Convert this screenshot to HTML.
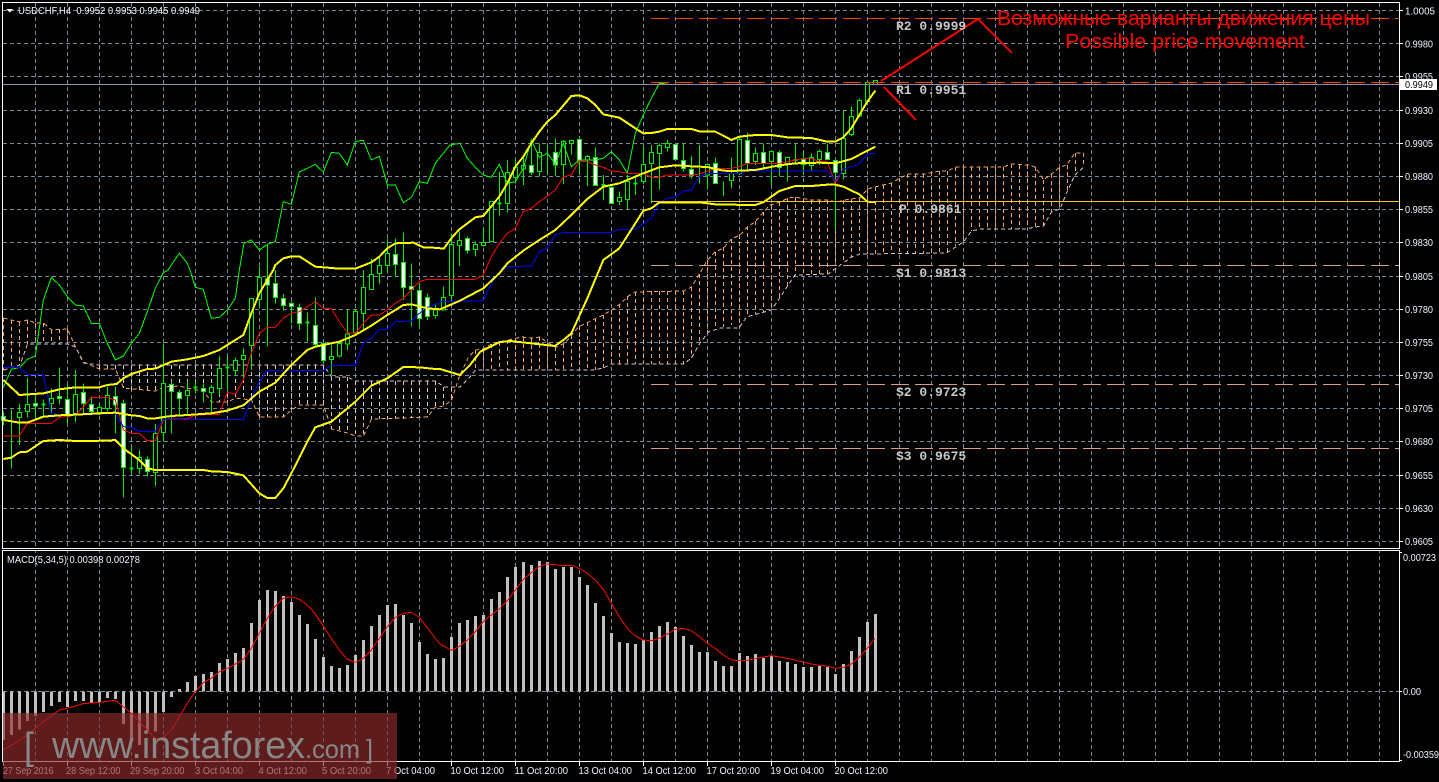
<!DOCTYPE html>
<html lang="en"><head><meta charset="utf-8"><title>USDCHF,H4</title>
<style>html,body{margin:0;padding:0;background:#000;width:1439px;height:782px;overflow:hidden}svg{display:block}
text{font-family:"Liberation Sans","DejaVu Sans",sans-serif}
.a text{font-size:10px;fill:#eef4ff}
.l text{font-family:"Liberation Mono",monospace;font-size:13px;font-weight:bold;fill:#c9c9c9}
</style></head><body>
<svg width="1439" height="782" viewBox="0 0 1439 782" xmlns="http://www.w3.org/2000/svg">
<defs><pattern id="g1" patternUnits="userSpaceOnUse" x="35" y="3" width="32" height="7"><rect width="1" height="4" fill="#778899"/></pattern></defs>
<rect width="1439" height="782" fill="#000"/>
<g shape-rendering="crispEdges">
<!-- grid -->
<rect x="35" y="3" width="1345" height="545" fill="url(#g1)"/>
<rect x="35" y="551" width="1345" height="210" fill="url(#g1)"/>
<path fill="none" stroke="#778899" stroke-dasharray="4 3" d="M3 10.5H1399M3 43.5H1399M3 76.5H1399M3 110.5H1399M3 143.5H1399M3 176.5H1399M3 209.5H1399M3 242.5H1399M3 276.5H1399M3 309.5H1399M3 342.5H1399M3 375.5H1399M3 408.5H1399M3 441.5H1399M3 475.5H1399M3 508.5H1399M3 541.5H1399M3 691.5H1399"/>

<!-- ichimoku cloud hatch -->
<path fill="none" stroke="#f4a460" stroke-dasharray="4 3" d="M3.5 318V370M11.5 320V367M19.5 322V365M27.5 320V344M35.5 323V344M43.5 323V344M51.5 330V344M59.5 329V344M67.5 329V344
M475.5 350V370M483.5 349V370M491.5 344V370M499.5 342V370M507.5 340V370M515.5 338V370M523.5 337V370M531.5 338V370M539.5 337V370M547.5 343V370M555.5 347V370M563.5 344V370M571.5 335V370M579.5 326V370M587.5 322V370M595.5 318V370M603.5 315V368M611.5 310V364M619.5 304V364M627.5 296V364M635.5 292V364M643.5 291V364M651.5 291V364M659.5 291V364M667.5 291V364M675.5 291V364M683.5 291V364M691.5 287V358M699.5 274V344M707.5 260V332M715.5 252V329M723.5 247V327M731.5 239V325M739.5 235V328M747.5 226V317M755.5 221V314M763.5 212V312M771.5 205V310M779.5 202V298M787.5 198V287M795.5 197V275M803.5 199V275M811.5 200V275M819.5 200V275M827.5 200V274M835.5 202V265M843.5 200V260M851.5 199V257M859.5 198V254M867.5 189V254M875.5 187V254M883.5 185V254M891.5 183V254M899.5 178V254M907.5 174V254M915.5 174V254M923.5 174V254M931.5 172V254M939.5 171V254M947.5 171V253M955.5 167V246M963.5 167V241M971.5 167V231M979.5 167V229M987.5 167V229M995.5 167V229M1003.5 167V229M1011.5 164V229M1019.5 165V229M1027.5 165V229M1035.5 167V227M1043.5 180V226M1051.5 174V212M1059.5 167V209M1067.5 165V193M1075.5 153V175M1083.5 153V167"/>
<path fill="none" stroke="#e4c6c6" stroke-dasharray="4 3" d="M99.5 365V369M107.5 365V369M115.5 365V369M123.5 365V388M131.5 365V390M139.5 365V390M147.5 365V390M155.5 365V391M163.5 365V387M171.5 365V386M179.5 365V386M187.5 365V388M195.5 365V390M203.5 365V391M211.5 365V402M219.5 365V402M227.5 365V402M235.5 365V398M243.5 365V399M251.5 365V400M259.5 365V417M267.5 365V417M275.5 365V417M283.5 365V417M291.5 365V410M299.5 365V405M307.5 365V405M315.5 365V405M323.5 365V405M331.5 377V429M339.5 377V431M347.5 377V433M355.5 381V436M363.5 381V436M371.5 381V419M379.5 381V419M387.5 381V419M395.5 381V419M403.5 381V419M411.5 381V418M419.5 381V418M427.5 381V417M435.5 381V407M443.5 387V406M451.5 387V400"/>
<!-- cloud edges -->
<polyline fill="none" stroke="#f4a460" stroke-dasharray="4 3" points="3.5,318 19.5,322 27.5,320 35.5,323 43.5,323 51.5,330 67.5,329 75.5,347 83.5,362 99.5,369 115.5,369 123.5,388 155.5,391 163.5,387 179.5,386 195.5,390 203.5,391 211.5,402 227.5,402 235.5,398 251.5,400 259.5,417 283.5,417 291.5,410 299.5,405 323.5,405 331.5,429 347.5,433 355.5,436 363.5,436 371.5,419 427.5,417 435.5,407 444,406 451.5,400 460,375 468.5,357 475.5,350 483.5,349 491.5,344 500,342 521.5,337 531.5,338 540,337 548,343 556.5,347 565,343 571.5,335 578.5,327 596.5,318 603.5,315 611.5,310 620,304 628.5,296 635,292 683.5,291 691.5,287 700,273 707.5,260 715,252 723.5,248 731.5,239 740,235 748.5,226 755,222 763.5,212 770,205 780,202 788.5,198 795,197 811.5,200 826.5,200 836.5,202 850,199 860,198 867.5,189 875,187 891.5,183 900,178 908.5,174 923.5,174 940,171 947,171 956.5,167 1003.5,167 1011.5,164 1028.5,165 1035,167 1040,174 1043.5,180 1051.5,174 1060,167 1066.5,165 1075,153 1083.5,153 1083.5,167"/>
<polyline fill="none" stroke="#d8bfd8" stroke-dasharray="4 3" points="3.5,370 20,365 27.5,344 67.5,344 75.5,347 83.5,363 99.5,365 323.5,365 331.5,377 347.5,377 355.5,381 436,381 444,387 460,387 470,377 475.5,370 593.5,370 603.5,368 611.5,364 683.5,364 691.5,358 700,343 708.5,332 720,328 739,328 746.5,317 771.5,310 795,275 828,274 851.5,257 860,254 946.5,253 963.5,242 971.5,231 980,229 1026.5,229 1035,227 1043.5,226 1051.5,212 1060,209 1066.5,193 1075,175 1083.5,167"/>

<!-- candles k0-54 -->
<g transform="translate(0,270) scale(.33333)" stroke="#00f000" stroke-width="3">
<path fill="none" d="M10.5 425V465M34.5 418V596M58.5 402V525M82.5 324V443M106.5 372V450M130.5 388V436M154.5 355V430M178.5 292V403M202.5 345V460M226.5 300V456M250.5 340V430M274.5 380V430M298.5 400V435M322.5 350V425M346.5 350V490M370.5 388V682M394.5 530V610M418.5 540V612M442.5 560V620M466.5 462V648M490.5 220V515M514.5 335V490M538.5 360V433M562.5 335V435M586.5 335V370M610.5 340V397M634.5 345V430M658.5 260V375M682.5 260V360M706.5 262V318M730.5 235V330M754.5 85V300M778.5 -10V115M802.5 -75V230M826.5 0V100M850.5 72V122M874.5 95V160M898.5 100V180M922.5 128V215M946.5 82V228M970.5 215V280M994.5 225V315M1018.5 215V262M1042.5 118V240M1066.5 118V195M1090.5 0V180M1114.5 -35V60M1138.5 -40V40M1162.5 -95V10M1186.5 -95V20M1210.5 -113V90M1234.5 -20V170M1258.5 40V170M1282.5 70V150M1306.5 100V145"/>
<path fill="#000" d="M52.5 428h12V442h-12zM76.5 403h12V424h-12zM148.5 385h12V400h-12zM220.5 373h12V430h-12zM292.5 413h12V428h-12zM316.5 376h12V415h-12zM412.5 562h12V595h-12zM460.5 490h12V607h-12zM484.5 340h12V487h-12zM556.5 361h12V376h-12zM628.5 352h12V367h-12zM652.5 295h12V355h-12zM700.5 271h12V301h-12zM724.5 256h12V268h-12zM748.5 85h12V226h-12zM772.5 22h12V88h-12zM988.5 260h12V268h-12zM1012.5 220h12V258h-12zM1036.5 192h12V222h-12zM1060.5 124h12V188h-12zM1084.5 52h12V130h-12zM1108.5 13h12V58h-12zM1132.5 -13h12V10h-12zM1156.5 -50h12V-13h-12zM1300.5 120h12V137h-12z"/>
<path fill="#fff" d="M4.5 440h12V452h-12zM100.5 401h12V408h-12zM172.5 379h12V385h-12zM196.5 388h12V440h-12zM244.5 367h12V400h-12zM268.5 403h12V424h-12zM340.5 379h12V405h-12zM364.5 400h12V592h-12zM436.5 568h12V604h-12zM508.5 344h12V364h-12zM532.5 367h12V385h-12zM604.5 355h12V364h-12zM796.5 25h12V45h-12zM820.5 40h12V82h-12zM844.5 85h12V107h-12zM868.5 100h12V109h-12zM892.5 112h12V160h-12zM940.5 166h12V224h-12zM964.5 220h12V271h-12zM1180.5 -47h12V-17h-12zM1204.5 -23h12V52h-12zM1228.5 50h12V58h-12zM1252.5 62h12V145h-12zM1276.5 83h12V140h-12z"/>
<path fill="none" stroke-width="6" d="M124.5 403h12M388.5 596h12M580.5 353h12M676.5 293h12M916.5 158h12"/>
</g>
<!-- candles k55-109 -->
<g transform="translate(440,60) scale(.33333)" stroke="#00f000" stroke-width="3">
<path fill="none" d="M10.5 680V752M34.5 520V720M58.5 515V618M82.5 530V580M106.5 545V590M130.5 507V560M154.5 424V548M178.5 336V466M202.5 300V458M226.5 300V370M250.5 290V375M274.5 240V345M298.5 250V350M322.5 255V345M346.5 235V348M370.5 240V372M394.5 238V283M418.5 235V345M442.5 285V378M466.5 262V378M490.5 345V420M514.5 375V432M538.5 395V435M562.5 345V448M586.5 345V405M610.5 258V372M634.5 255V430M658.5 250V388M682.5 240V275M706.5 250V300M730.5 250V335M754.5 290V355M778.5 255V370M802.5 310V388M826.5 292V372M850.5 365V408M874.5 292V385M898.5 232V345M922.5 217V330M946.5 262V315M970.5 250V330M994.5 272V375M1018.5 272V350M1042.5 290V365M1066.5 250V310M1090.5 272V345M1114.5 280V335M1138.5 268V315M1162.5 250V300M1186.5 298V505M1210.5 150V358M1234.5 140V228M1258.5 115V172M1282.5 67V127M1306.5 60V75"/>
<path fill="#000" d="M4.5 712h12V750h-12zM28.5 553h12V707h-12zM52.5 541h12V556h-12zM100.5 553h12V568h-12zM124.5 547h12V556h-12zM148.5 424h12V545h-12zM196.5 337h12V430h-12zM220.5 322h12V352h-12zM244.5 316h12V327h-12zM292.5 277h12V334h-12zM364.5 244h12V313h-12zM388.5 241h12V250h-12zM436.5 290h12V300h-12zM532.5 413h12V425h-12zM556.5 365h12V418h-12zM604.5 313h12V365h-12zM628.5 277h12V311h-12zM652.5 256h12V280h-12zM676.5 250h12V262h-12zM796.5 313h12V345h-12zM868.5 340h12V361h-12zM892.5 238h12V340h-12zM940.5 280h12V305h-12zM988.5 274h12V305h-12zM1036.5 292h12V310h-12zM1108.5 292h12V316h-12zM1132.5 274h12V298h-12zM1204.5 235h12V340h-12zM1228.5 169h12V224h-12zM1252.5 121h12V168h-12zM1276.5 67h12V124h-12zM1300.5 62h12V73h-12z"/>
<path fill="#fff" d="M76.5 535h12V571h-12zM268.5 316h12V337h-12zM340.5 278h12V315h-12zM412.5 239h12V300h-12zM460.5 293h12V376h-12zM508.5 382h12V430h-12zM700.5 253h12V298h-12zM724.5 302h12V325h-12zM748.5 329h12V346h-12zM820.5 310h12V370h-12zM916.5 241h12V310h-12zM964.5 277h12V310h-12zM1012.5 277h12V322h-12zM1084.5 298h12V313h-12zM1156.5 277h12V299h-12zM1180.5 301h12V337h-12z"/>
<path fill="none" stroke-width="6" d="M172.5 430h12M484.5 375h12M580.5 370h12M1060.5 300h12"/>
</g>

<!-- indicator lines left (zoom2 coords) -->
<g transform="translate(0,270) scale(.33333)" fill="none" stroke-width="3">
<polyline stroke="#00ff00" points="10,352 34,298 60,292 82,268 106,258 130,90 154,22 178,45 202,80 226,105 250,108 274,160 298,160 322,220 346,270 370,258 394,220 418,190 442,125 466,55 490,8 504,0 538,-50 562,-20 570,0 586,52 610,58 634,145 658,142 682,120 706,85 718,0 732,-80 754,-90 778,-60 802,-77 826,-85 850,-205 874,-197 898,-294 922,-305 946,-317 970,-294 994,-353 1018,-350 1042,-315 1066,-386 1090,-389 1114,-330 1138,-341 1162,-255 1186,-255 1210,-202 1234,-218 1258,-265 1282,-260 1306,-320 1320,-338"/>
<polyline stroke="#ff0000" points="10,498 58,498 82,460 154,460 178,442 226,436 250,412 274,382 322,382 346,390 370,480 394,490 418,490 442,512 466,512 490,450 514,447 562,447 586,435 658,433 682,367 706,373 730,330 754,250 778,190 802,172 826,172 850,145 874,130 898,125 946,95 970,115 994,115 1018,155 1042,188 1066,190 1090,160 1114,135 1138,135 1162,120 1186,100 1210,85 1234,60 1258,35 1282,28 1320,28"/>
<polyline stroke="#0000ff" points="10,293 58,293 82,313 130,313 154,432 226,436 346,430 370,470 394,472 418,484 466,484 490,448 730,448 754,385 778,335 802,301 970,301 994,286 1066,286 1090,220 1114,205 1138,178 1162,178 1186,155 1234,153 1258,130 1282,112 1320,98"/>
<g stroke="#ffff00" stroke-width="6">
<polyline points="10,330 58,375 130,370 178,358 226,352 298,352 322,345 350,342 370,325 394,312 442,297 466,296 514,275 562,268 610,258 658,240 706,210 730,195 754,130 778,70 802,30 820,0 826,-15 850,-35 874,-41 898,-41 946,-10 970,-8 1018,-4 1066,-4 1114,-23 1138,-40 1162,-65 1186,-80 1240,-82 1270,-68 1320,-66"/>
<polyline points="10,450 58,458 82,458 130,440 178,436 226,434 298,430 346,428 394,436 418,438 442,445 466,445 514,438 562,435 634,430 682,422 730,406 778,365 826,338 874,285 922,240 946,230 1018,215 1066,195 1114,167 1162,135 1210,105 1234,103 1282,115 1320,118"/>
<polyline points="10,567 34,563 58,547 82,545 130,513 178,510 226,513 322,512 346,510 370,535 418,570 442,595 466,600 610,600 634,604 682,606 730,616 778,670 802,684 826,684 850,655 874,610 922,515 946,472 994,455 1018,435 1066,395 1114,347 1162,325 1210,291 1258,292 1306,297 1320,297"/>
</g>
</g>
<!-- indicator lines right (zoom3 coords) -->
<g transform="translate(440,60) scale(.33333)" fill="none" stroke-width="3">
<polyline stroke="#00ff00" points="0,292 30,255 60,250 82,295 106,322 130,345 154,352 178,313 202,370 226,365 250,325 274,240 298,292 322,280 346,312 370,250 394,320 418,300 442,300 466,300 490,295 514,275 538,300 562,340 586,220 610,165 634,115 658,70 682,72"/>
<polyline stroke="#ff0000" points="0,658 106,658 130,645 154,590 178,550 202,520 226,505 250,455 274,445 298,425 322,408 346,390 370,350 394,345 418,303 442,305 466,315 490,322 514,333 538,335 562,340 610,340 634,352 658,352 682,345 754,345 778,342 826,325 874,325 898,320 922,310 1018,310 1042,305 1090,295 1114,295 1138,305 1162,305 1186,370 1210,325"/>
<polyline stroke="#0000ff" points="0,725 130,722 154,670 178,640 202,620 274,618 298,575 322,565 346,525 370,517 514,517 538,508 586,508 634,475 658,428 682,415 706,412 730,393 754,390 778,350 802,340 898,340 922,333 1162,333 1186,362 1210,328 1234,320 1258,312 1282,282 1306,280"/>
<g stroke="#ffff00" stroke-width="6">
<polyline points="0,565 12,565 34,535 58,508 106,472 130,468 178,410 202,370 226,320 250,290 274,250 298,215 322,185 346,165 394,108 418,106 442,115 466,135 490,163 538,173 586,205 610,220 634,219 658,215 682,207 754,207 778,214 826,215 850,227 874,240 898,230 946,225 994,225 1042,232 1114,234 1162,245 1186,245 1210,232 1234,205 1258,165 1282,125 1306,92"/>
<polyline points="0,748 60,722 130,685 178,640 202,610 250,572 298,540 346,510 394,465 442,417 490,380 538,370 586,350 610,340 658,322 706,316 754,319 802,321 850,332 874,333 946,330 1018,316 1066,310 1138,308 1186,310 1234,297 1282,272 1306,260"/>
<polyline points="0,927 60,945 90,915 120,876 180,846 210,843 345,858 370,840 394,820 442,715 490,600 538,565 586,490 610,452 634,445 658,427 778,427 826,433 874,433 898,435 946,435 970,427 994,410 1018,393 1066,378 1114,378 1162,374 1186,374 1210,380 1258,403 1282,425 1306,427"/>
</g>
</g>

<!-- levels -->
<path fill="none" stroke="#ff4500" stroke-dasharray="18 6" d="M651 18.5H1399M651 82.5H1399"/>
<path fill="none" stroke="#d89c88" stroke-dasharray="18 6" d="M651 265.5H1399M651 384.5H1399M651 448.5H1399"/>
<path fill="none" stroke="#f5c518" d="M651 201.5H1399"/>
<path fill="none" stroke="#8595a6" d="M3 84.5H1399"/>
<!-- red arrows -->
<path fill="none" stroke="#ff0000" stroke-width="2" d="M881 81L978 19L1012 53M884 87L916 120"/>

<!-- MACD bars -->
<g transform="translate(0,540) scale(.33333)" fill="none">
<path stroke="#c0c0c0" stroke-width="9" d="M10.5 454V600M34.5 454V585M58.5 454V568M82.5 454V543M106.5 454V528M130.5 454V516M154.5 454V498M178.5 454V486M202.5 454V501M226.5 454V483M250.5 454V483M274.5 454V488M298.5 454V486M322.5 454V474M346.5 454V477M370.5 454V552M394.5 454V600M418.5 454V615M442.5 454V575M466.5 454V575M490.5 454V516M514.5 454V471M538.5 454V447M562.5 454V426M586.5 454V408M610.5 454V402M634.5 454V396M658.5 454V369M682.5 454V357M706.5 454V339M730.5 454V324M754.5 454V249M778.5 454V180M802.5 454V150M826.5 454V153M850.5 454V168M874.5 454V186M898.5 454V225M922.5 454V252M946.5 454V297M970.5 454V351M994.5 454V378M1018.5 454V384M1042.5 454V375M1066.5 454V345M1090.5 454V300M1114.5 454V258M1138.5 454V225M1162.5 454V195M1186.5 454V192M1210.5 454V225M1234.5 454V249M1258.5 454V306M1282.5 454V342M1306.5 454V357"/>
<polyline stroke="#ff0000" stroke-width="3" points="10,630 40,612 82,585 130,545 178,510 202,505 250,491 298,487 346,481 370,500 394,520 418,545 442,570 466,597 490,593 514,570 538,530 562,490 586,455 610,428 634,415 658,395 682,385 706,372 730,358 754,325 778,280 802,235 826,198 850,175 874,170 898,178 922,195 946,222 970,258 994,295 1018,330 1042,358 1066,367 1090,355 1114,330 1138,295 1162,260 1186,232 1210,220 1234,217 1258,232 1282,263 1306,295 1320,312"/>
</g>
<g transform="translate(440,540) scale(.33333)" fill="none">
<path stroke="#c0c0c0" stroke-width="9" d="M10.5 454V354M34.5 454V291M58.5 454V249M82.5 454V240M106.5 454V228M130.5 454V225M154.5 454V177M178.5 454V156M202.5 454V111M226.5 454V81M250.5 454V66M274.5 454V75M298.5 454V63M322.5 454V66M346.5 454V87M370.5 454V81M394.5 454V81M418.5 454V111M442.5 454V135M466.5 454V189M490.5 454V228M514.5 454V279M538.5 454V306M562.5 454V309M586.5 454V312M610.5 454V300M634.5 454V276M658.5 454V258M682.5 454V246M706.5 454V261M730.5 454V288M754.5 454V315M778.5 454V336M802.5 454V336M826.5 454V363M850.5 454V378M874.5 454V378M898.5 454V339M922.5 454V348M946.5 454V342M970.5 454V354M994.5 454V348M1018.5 454V363M1042.5 454V366M1066.5 454V372M1090.5 454V381M1114.5 454V381M1138.5 454V378M1162.5 454V381M1186.5 454V402M1210.5 454V372M1234.5 454V333M1258.5 454V291M1282.5 454V246M1306.5 454V222"/>
<polyline stroke="#ff0000" stroke-width="3" points="0,312 34,331 58,320 82,300 106,275 130,245 154,225 178,207 202,182 226,150 250,118 274,98 298,80 322,72 346,74 370,77 394,76 418,85 442,100 466,120 490,148 514,190 538,230 562,265 586,288 610,300 634,302 658,295 682,282 706,268 730,265 754,272 778,290 802,310 826,325 850,345 874,360 898,362 922,361 946,356 970,351 994,347 1018,351 1042,355 1066,360 1090,367 1114,372 1138,376 1162,378 1186,385 1210,382 1234,372 1258,352 1282,325 1304,296"/>
</g>

<!-- frames and ticks -->
<path fill="none" stroke="#fff" d="M2.5 2.5H1399.5V548.5H2.5ZM2.5 550.5H1399.5V761.5H2.5Z"/>
<path fill="none" stroke="#fff" d="M1400 10.5h3M1400 43.5h3M1400 76.5h3M1400 110.5h3M1400 143.5h3M1400 176.5h3M1400 209.5h3M1400 242.5h3M1400 276.5h3M1400 309.5h3M1400 342.5h3M1400 375.5h3M1400 408.5h3M1400 441.5h3M1400 475.5h3M1400 508.5h3M1400 541.5h3M1400 552.5h2M1400 691.5h2M1400 760.5h2M3.5 762v4M67.5 762v4M131.5 762v4M195.5 762v4M259.5 762v4M323.5 762v4M387.5 762v4M451.5 762v4M515.5 762v4M579.5 762v4M643.5 762v4M707.5 762v4M771.5 762v4M835.5 762v4"/>
<rect x="1400" y="79" width="37" height="11" fill="#fff"/>
<path d="M6 9h7l-3.500 3.500z" fill="#fff"/>
</g>

<!-- axis text -->
<g class="a">
<text x="18" y="14" textLength="182" lengthAdjust="spacingAndGlyphs">USDCHF,H4&#160;&#160;0.9952 0.9953 0.9945 0.9949</text>
<text x="7" y="563" textLength="133" lengthAdjust="spacingAndGlyphs">MACD(5,34,5) 0.00398 0.00278</text>
<text x="1405" y="14.500" textLength="30" lengthAdjust="spacingAndGlyphs">1.0005</text>
<text x="1405" y="47.500" textLength="28" lengthAdjust="spacingAndGlyphs">0.9980</text>
<text x="1405" y="80" textLength="28" lengthAdjust="spacingAndGlyphs">0.9955</text>
<text x="1405" y="114" textLength="28" lengthAdjust="spacingAndGlyphs">0.9930</text>
<text x="1405" y="147" textLength="28" lengthAdjust="spacingAndGlyphs">0.9905</text>
<text x="1405" y="180" textLength="28" lengthAdjust="spacingAndGlyphs">0.9880</text>
<text x="1405" y="213" textLength="28" lengthAdjust="spacingAndGlyphs">0.9855</text>
<text x="1405" y="246" textLength="28" lengthAdjust="spacingAndGlyphs">0.9830</text>
<text x="1405" y="280" textLength="28" lengthAdjust="spacingAndGlyphs">0.9805</text>
<text x="1405" y="313" textLength="28" lengthAdjust="spacingAndGlyphs">0.9780</text>
<text x="1405" y="346" textLength="28" lengthAdjust="spacingAndGlyphs">0.9755</text>
<text x="1405" y="379" textLength="28" lengthAdjust="spacingAndGlyphs">0.9730</text>
<text x="1405" y="412" textLength="28" lengthAdjust="spacingAndGlyphs">0.9705</text>
<text x="1405" y="445" textLength="28" lengthAdjust="spacingAndGlyphs">0.9680</text>
<text x="1405" y="479" textLength="28" lengthAdjust="spacingAndGlyphs">0.9655</text>
<text x="1405" y="512" textLength="28" lengthAdjust="spacingAndGlyphs">0.9630</text>
<text x="1405" y="545" textLength="28" lengthAdjust="spacingAndGlyphs">0.9605</text>
<text x="1403" y="561" textLength="33" lengthAdjust="spacingAndGlyphs">0.00723</text>
<text x="1403" y="695" textLength="18" lengthAdjust="spacingAndGlyphs">0.00</text>
<text x="1403" y="758" textLength="36" lengthAdjust="spacingAndGlyphs">-0.00359</text>
<text x="1405" y="88" textLength="28" lengthAdjust="spacingAndGlyphs" style="fill:#000">0.9949</text>
<text x="3" y="774" textLength="50.500" lengthAdjust="spacingAndGlyphs">27 Sep 2016</text>
<text x="66" y="774" textLength="54.500" lengthAdjust="spacingAndGlyphs">28 Sep 12:00</text>
<text x="130" y="774" textLength="54.500" lengthAdjust="spacingAndGlyphs">29 Sep 20:00</text>
<text x="195" y="774" textLength="48" lengthAdjust="spacingAndGlyphs">3 Oct 04:00</text>
<text x="258.500" y="774" textLength="48.500" lengthAdjust="spacingAndGlyphs">4 Oct 12:00</text>
<text x="322" y="774" textLength="49" lengthAdjust="spacingAndGlyphs">5 Oct 20:00</text>
<text x="386" y="774" textLength="49" lengthAdjust="spacingAndGlyphs">7 Oct 04:00</text>
<text x="450.500" y="774" textLength="53.500" lengthAdjust="spacingAndGlyphs">10 Oct 12:00</text>
<text x="514.500" y="774" textLength="53.500" lengthAdjust="spacingAndGlyphs">11 Oct 20:00</text>
<text x="578.500" y="774" textLength="53.500" lengthAdjust="spacingAndGlyphs">13 Oct 04:00</text>
<text x="642.500" y="774" textLength="53.500" lengthAdjust="spacingAndGlyphs">14 Oct 12:00</text>
<text x="706.500" y="774" textLength="53.500" lengthAdjust="spacingAndGlyphs">17 Oct 20:00</text>
<text x="770.500" y="774" textLength="53.500" lengthAdjust="spacingAndGlyphs">19 Oct 04:00</text>
<text x="834.500" y="774" textLength="53.500" lengthAdjust="spacingAndGlyphs">20 Oct 12:00</text>
</g>

<!-- level labels -->
<g class="l">
<text x="896" y="30">R2 0.9999</text>
<text x="896" y="94">R1 0.9951</text>
<text x="899" y="213">P 0.9861</text>
<text x="896" y="277">S1 0.9813</text>
<text x="896" y="396">S2 0.9723</text>
<text x="896" y="460">S3 0.9675</text>
</g>
<!-- annotation -->
<text x="997" y="25" font-size="20" fill="#ff0000" textLength="373" lengthAdjust="spacingAndGlyphs">Возможные варианты движения цены</text>
<text x="1065" y="48" font-size="20" fill="#ff0000" textLength="240" lengthAdjust="spacingAndGlyphs">Possible price movement</text>

<!-- watermark -->
<rect x="3" y="713" width="394" height="66" fill="rgb(145,43,43)" fill-opacity=".65"/>
<text x="24" y="759" font-size="38" fill="#878787" textLength="10" lengthAdjust="spacingAndGlyphs">[</text>
<text x="52" y="758" font-size="38" fill="#878787" textLength="253" lengthAdjust="spacingAndGlyphs">www.instaforex</text>
<text x="305" y="758" font-size="26" fill="#878787" textLength="55" lengthAdjust="spacingAndGlyphs">.com</text>
<text x="366" y="758" font-size="26" fill="#878787" textLength="7" lengthAdjust="spacingAndGlyphs">]</text>
</svg>
</body></html>
